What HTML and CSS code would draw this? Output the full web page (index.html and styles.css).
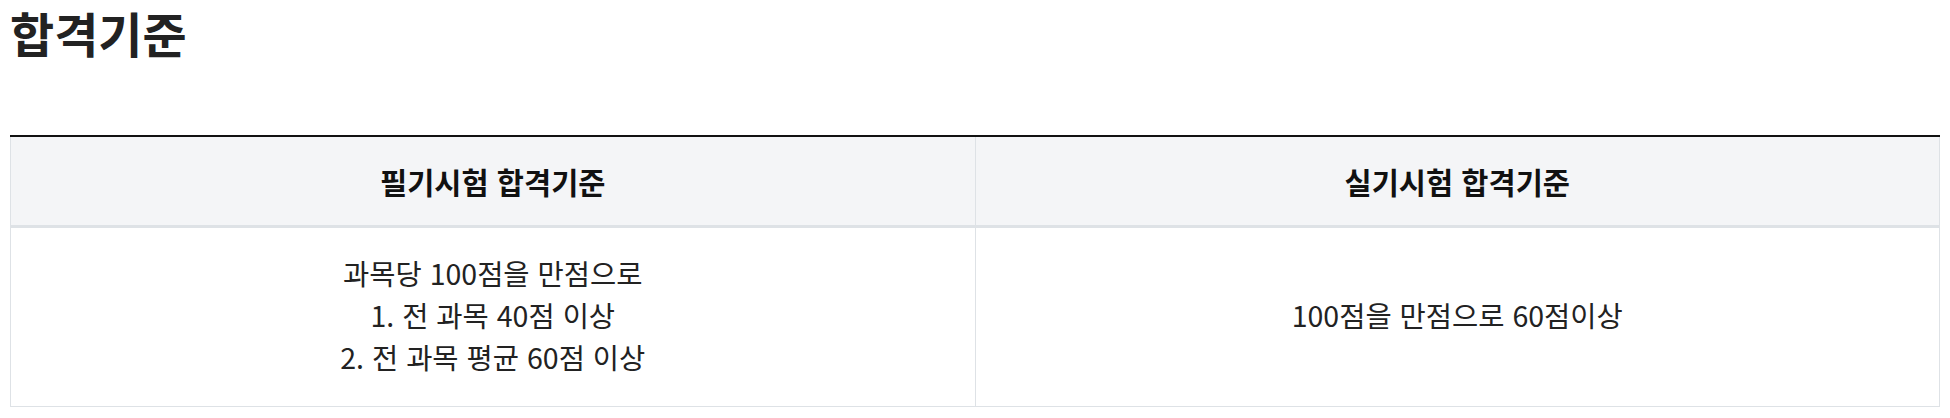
FILE: index.html
```html
<!DOCTYPE html>
<html lang="ko">
<head>
<meta charset="utf-8">
<title>합격기준</title>
<link rel="stylesheet" href="styles.css">
</head>
<body>
<section class="criteria">
  <h2 class="criteria-title">합격기준</h2>
  <table class="criteria-table">
    <thead>
      <tr>
        <th>필기시험 합격기준</th>
        <th>실기시험 합격기준</th>
      </tr>
    </thead>
    <tbody>
      <tr>
        <td>과목당 100점을 만점으로<br>1. 전 과목 40점 이상<br>2. 전 과목 평균 60점 이상</td>
        <td>100점을 만점으로 60점이상</td>
      </tr>
    </tbody>
  </table>
</section>
</body>
</html>
```

FILE: styles.css
```css
html, body {
  margin: 0;
  padding: 0;
  background: #ffffff;
}

body {
  font-family: "Noto Sans CJK KR", "Noto Sans", sans-serif;
  color: #222222;
}

.criteria {
  padding: 0 10px;
}

.criteria-title {
  margin: 0;
  font-size: 48px;
  font-weight: 700;
  line-height: 64px;
  color: #222222;
  height: 135px;
}

.criteria-table {
  width: 100%;
  border-collapse: collapse;
  table-layout: fixed;
  border-top: 2px solid #111111;
}

.criteria-table th,
.criteria-table td {
  border: 1px solid #dee2e6;
  text-align: center;
  vertical-align: middle;
  line-height: 42px;
}

.criteria-table th {
  background: #f4f5f7;
  font-size: 29.5px;
  font-weight: 700;
  color: #111111;
  padding: 23px 10px;
  border-bottom: 3px solid #dee2e6;
}

.criteria-table td {
  font-size: 28.5px;
  font-weight: 400;
  color: #222222;
  padding: 24px 10px 28px;
}
```
